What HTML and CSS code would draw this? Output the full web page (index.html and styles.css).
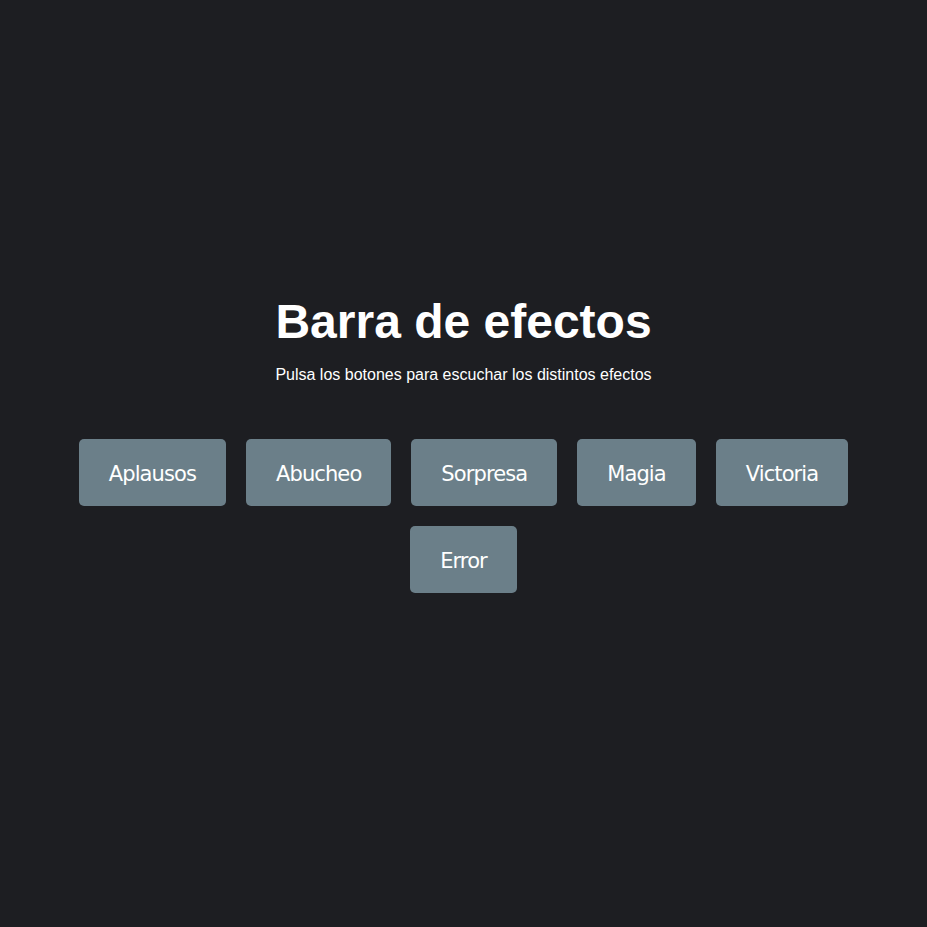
FILE: index.html
```html
<!DOCTYPE html>
<html lang="es">
<head>
<meta charset="utf-8">
<title>Barra de efectos</title>
<link rel="stylesheet" href="styles.css">
</head>
<body>
<main class="page">
  <h1 class="title">Barra de efectos</h1>
  <p class="subtitle">Pulsa los botones para escuchar los distintos efectos</p>
  <div class="buttons">
    <button class="effect">Aplausos</button>
    <button class="effect">Abucheo</button>
    <button class="effect">Sorpresa</button>
    <button class="effect">Magia</button>
    <button class="effect">Victoria</button>
    <button class="effect">Error</button>
  </div>
</main>
</body>
</html>
```
FILE: styles.css
```css
html, body {
  margin: 0;
  padding: 0;
}
body {
  background: #1d1e22;
  color: #ffffff;
  font-family: "Liberation Sans", Arial, sans-serif;
  min-height: 100vh;
}
.page {
  min-height: 100vh;
  display: flex;
  flex-direction: column;
  align-items: center;
  justify-content: center;
  box-sizing: border-box;
}
.title {
  margin: 2px 0 17px;
  font-size: 48px;
  font-weight: bold;
  line-height: 55px;
}
.subtitle {
  margin: 0;
  font-size: 16px;
  line-height: 18px;
}
.buttons {
  margin: 45px 0 33px;
  max-width: 800px;
  display: flex;
  flex-wrap: wrap;
  justify-content: center;
}
.effect {
  margin: 10px;
  padding: 22px 30px 18px;
  border: none;
  border-radius: 5px;
  background: #6b7f89;
  color: #ffffff;
  font-family: "DejaVu Sans", Tahoma, sans-serif;
  font-size: 21px;
  letter-spacing: -0.9px;
  line-height: 27px;
  cursor: pointer;
}
```
